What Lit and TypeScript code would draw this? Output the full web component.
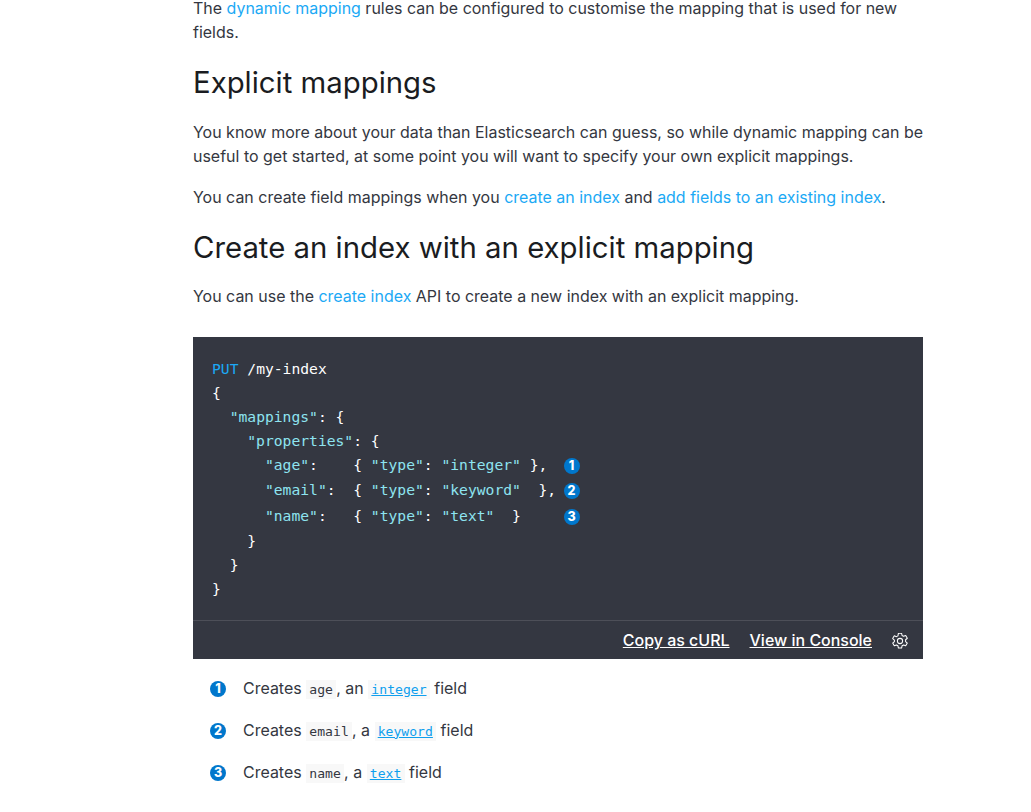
import { LitElement, html, css } from "lit";
import { customElement } from "lit/decorators.js";

const callout = (n: number) => html`<span class="co">${n}</span>`;

@customElement("app-root")
export class AppRoot extends LitElement {
  static styles = css`
    :host { display: block; height: 812px; overflow: hidden; background: #fff; font-family: Inter, "Liberation Sans", sans-serif; color: #343741; font-size: 15.97px; line-height: 24px; }
    .page { width: 730px; margin: -3px 0 0 193px; }
    p { margin: 0 0 17px; }
    a { color: #1ba9f5; text-decoration: none; }
    h2 { font-size: 29.35px; line-height: 36px; font-weight: 400; color: #1a1c21; margin: 0; }
    .h1 { margin: 20px 0 20px; }
    .h2 { margin: 20px 0 19px; }
    .code { background: #343741; margin-top: 28px; height: 322px; display: flex; flex-direction: column; }
    pre { margin: 0; padding: 19.5px 19px 0; flex: 1; font-family: "DejaVu Sans Mono", monospace; font-size: 14.66px; line-height: 24.2px; color: #fff; }
    .m { color: #1ba9f5; }
    .k { color: #8ee4f0; }
    .s { color: #8ee4f0; }
    .co { display: inline-block; width: 16px; height: 16px; border-radius: 50%; background: #0077cc; color: #fff; font: 800 12.5px/16px Inter, sans-serif; text-align: center; vertical-align: middle; }
    pre .co { margin: 4.1px 0 4.1px -1.5px; }
    .bar { height: 36px; padding-top: 2px; border-top: 1px solid #4d4f58; display: flex; align-items: center; justify-content: flex-end; gap: 20px; padding-right: 15px; }
    .bar a { color: #fff; font-weight: 500; text-decoration: underline; }
    .bar svg { width: 16px; height: 16px; display: block; }
    .list { margin: 18px 0 0; padding: 0 0 0 17px; }
    .row { display: flex; align-items: center; gap: 17px; height: 24px; margin-bottom: 18px; }
    code { font-family: "DejaVu Sans Mono", monospace; font-size: 13.1px; background: #f8f8f8; padding: 2px 3.2px; color: #343741; }
    code.l { color: #0f9fee; text-decoration: underline; }
  `;

  render() {
    return html`<div class="page">
      <p>The <a>dynamic mapping</a> rules can be configured to customise the mapping that is used for new fields.</p>
      <h2 class="h1">Explicit mappings</h2>
      <p>You know more about your data than Elasticsearch can guess, so while dynamic mapping can be useful to get started, at some point you will want to specify your own explicit mappings.</p>
      <p>You can create field mappings when you <a>create an index</a> and <a>add fields to an existing index</a>.</p>
      <h2 class="h2">Create an index with an explicit mapping</h2>
      <p>You can use the <a>create index</a> API to create a new index with an explicit mapping.</p>
      <div class="code">
        <pre><span class="m">PUT</span> /my-index
{
  <span class="k">"mappings"</span>: {
    <span class="k">"properties"</span>: {
      <span class="k">"age"</span>:    { <span class="k">"type"</span>: <span class="s">"integer"</span> },  ${callout(1)}
      <span class="k">"email"</span>:  { <span class="k">"type"</span>: <span class="s">"keyword"</span>  }, ${callout(2)}
      <span class="k">"name"</span>:   { <span class="k">"type"</span>: <span class="s">"text"</span>  }     ${callout(3)}
    }
  }
}</pre>
        <div class="bar">
          <a>Copy as cURL</a><a>View in Console</a>
          <svg viewBox="1 1 14 14" fill="none" stroke="#fff" stroke-width=".9" stroke-linejoin="round"><path d="M6.6 1.2h2.800l.4 2 1.300.7 1.900-.7 1.400 2.400-1.500 1.300v1.600l1.500 1.300-1.400 2.400-1.900-.7-1.300.7-.4 2H6.600l-.4-2-1.300-.7-1.900.7-1.400-2.400 1.500-1.300V7.200L1.600 5.900l1.400-2.400 1.900.7 1.300-.7z"/><circle cx="8" cy="8" r="2.300"/></svg>
        </div>
      </div>
      <div class="list">
        <div class="row">${callout(1)}<span>Creates <code>age</code>, an <a><code class="l">integer</code></a> field</span></div>
        <div class="row">${callout(2)}<span>Creates <code>email</code>, a <a><code class="l">keyword</code></a> field</span></div>
        <div class="row">${callout(3)}<span>Creates <code>name</code>, a <a><code class="l">text</code></a> field</span></div>
      </div>
    </div>`;
  }
}
